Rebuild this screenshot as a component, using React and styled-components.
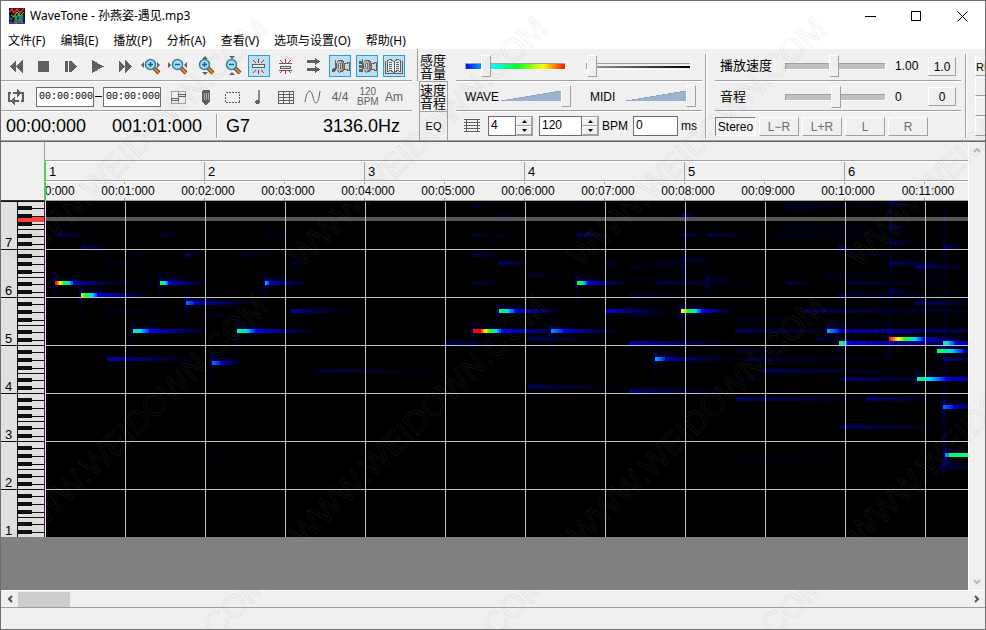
import React from 'react';
import styled, { createGlobalStyle, css } from 'styled-components';

const ui = '"Liberation Sans", "Noto Sans CJK SC", sans-serif';
const shell = '"Noto Sans", "Noto Sans CJK SC", sans-serif';

const Global = createGlobalStyle`
  * { box-sizing: border-box; }
  body { margin: 0; background: #f0f0f0; font-family: ${ui}; font-size: 12px; color: #000; }
  button, input { font: inherit; color: inherit; margin: 0; border-radius: 0; }
  svg { display: block; }
`;

const Window = styled.div`
  position: relative;
  display: flex;
  flex-direction: column;
  min-height: 100vh;
  border: 1px solid #6f6f71;
  background: #f0f0f0;
  overflow: hidden;
`;

/* ---------- title and menu ---------- */

const TitleBar = styled.header`
  display: flex;
  align-items: center;
  height: 30px;
  padding-left: 8px;
  background: #fff;
  font-family: ${shell};
`;
const Title = styled.h1`
  flex: 1;
  margin: 0 0 0 5px;
  font-size: 12px;
  font-weight: 400;
  line-height: 16px;
`;
const CaptionButton = styled.button`
  display: grid;
  place-items: center;
  width: 46px;
  height: 30px;
  padding: 0;
  border: 0;
  background: none;
`;
const MenuBar = styled.nav`
  display: flex;
  height: 18px;
  padding-left: 7px;
  gap: 15px;
  background: #fff;
  font-family: ${shell};
`;
const MenuItem = styled.button`
  padding: 2px 0 0;
  border: 0;
  background: none;
  font-size: 12px;
  line-height: 16px;
  white-space: nowrap;
`;

/* ---------- toolbar ---------- */

const Toolbar = styled.section`
  display: flex;
  height: 93px;
  overflow: hidden;
  border-bottom: 1px solid #696969;
  box-shadow: inset 0 -1px #a0a0a0;
`;
const Panel = styled.div`
  flex: none;
  display: grid;
  grid-template-rows: 33px 30px 28px;
  width: ${p => p.$width}px;
  margin-left: ${p => p.$gap || 0}px;
`;
const Row = styled.div`
  display: flex;
  align-items: center;
  gap: ${p => p.$gap || 0}px;
  padding: ${p => (p.$top ? '2px' : '0')} 0 0 ${p => p.$left || 0}px;
  &:not(:last-child) {
    border-bottom: 1px solid #fff;
    box-shadow: inset 0 -1px #a0a0a0;
  }
`;
const Group = styled.span`
  flex: none;
  display: flex;
  align-items: center;
  margin: 0 ${p => p.$after || 0}px 0 ${p => p.$before || 0}px;
`;
const Stack = styled.div`
  flex: none;
  display: flex;
  flex-direction: column;
  gap: 1px;
  padding-top: 8px;
  margin-left: 8px;
`;
const VRule = styled.div`
  flex: none;
  width: 2px;
  height: ${p => p.$height}px;
  margin: ${p => p.$margin || '0'};
  background: linear-gradient(to right, #a0a0a0 50%, #fff 50%);
`;
const ToolButton = styled.button`
  flex: none;
  display: grid;
  place-items: center;
  width: 22px;
  height: 22px;
  padding: 0;
  border: 1px solid ${p => (p.$on ? '#26a0da' : 'transparent')};
  background: ${p => (p.$on ? '#bcdff2' : 'none')};
  color: #606060;
  font-size: ${p => (p.$small ? 10 : 12)}px;
  line-height: 10px;
`;
const TimeInput = styled.input`
  width: 58px;
  height: 20px;
  padding: 0 0 1px 2px;
  border: 1px solid #6d6d6d;
  background: #fff;
  font-family: "Liberation Mono", monospace;
  font-size: 10px;
`;
const Dash = styled.span`
  width: 7px;
  height: 1px;
  margin: 0 1px;
  background: #000;
`;
const Readout = styled.output`
  width: ${p => p.$width}px;
  text-align: ${p => (p.$right ? 'right' : 'left')};
  font-size: 18px;
  line-height: 26px;
`;
const Tabs = styled.div`
  flex: none;
  display: grid;
  grid-template-rows: 32px 30px 29px;
  width: 31px;
  margin-left: 5px;
`;
const Tab = styled.button`
  padding: ${p => (p.$active ? '4px 0 0 2px' : '1px 0 0 0')};
  border: 0;
  border-left: 1px solid #a0a0a0;
  ${p => !p.$active && css`
    margin-left: 2px;
    border-top: 1px solid #a0a0a0;
    border-right: 1px solid #a0a0a0;
  `}
  background: #f0f0f0;
  font-size: ${p => (p.$latin ? 11 : 13)}px;
  line-height: 13px;
  text-align: ${p => (p.$latin ? 'center' : 'left')};
  overflow: hidden;
`;

const Slider = styled.input`
  appearance: none;
  flex: none;
  width: ${p => p.$width || 100}px;
  height: 22px;
  margin: ${p => p.$margin || '0'};
  background: ${p => p.$wedge
    ? 'linear-gradient(to bottom right, transparent 47%, #909aa8 48%, #9ab3d0 53%) 0 5px / 60px 10px no-repeat'
    : 'none'};
  &::-webkit-slider-runnable-track {
    height: 6px;
    background: ${p => (p.$wedge ? 'none' : p.$track || '#c0c0c0')};
    ${p => !p.$wedge && css`
      border-top: 1px solid #a0a0a0;
      border-left: 1px solid #a0a0a0;
      box-shadow: 1px 1px #fff;
    `}
  }
  &::-webkit-slider-thumb {
    appearance: none;
    width: 10px;
    height: 22px;
    margin-top: -9px;
    border: 1px solid;
    border-color: #fff #a0a0a0 #a0a0a0 #fff;
    background: #f0f0f0;
  }
`;
const Label = styled.label`
  flex: none;
  width: ${p => p.$width}px;
  font-size: ${p => p.$size || 12}px;
  line-height: 16px;
  white-space: nowrap;
`;
const Field = styled.input`
  width: ${p => p.$width}px;
  height: 20px;
  padding: 0 2px 2px;
  border: 1px solid #6d6d6d;
  background: #fff;
  font-size: 12px;
`;
const Spin = styled.span`
  display: flex;
  margin-right: ${p => p.$after}px;
`;
const SpinPair = styled.span`
  display: grid;
  grid-template-rows: 9px 9px;
  width: 17px;
  height: 20px;
  border: 1px solid #a0a0a0;
  border-left: 0;
`;
const SpinButton = styled.button`
  display: grid;
  place-items: center;
  height: 9px;
  padding: 0;
  border: 1px solid;
  border-color: #fff #a0a0a0 #a0a0a0 #fff;
  background: #f0f0f0;
`;
const PushButton = styled.button`
  flex: none;
  width: ${p => p.$width}px;
  height: 19px;
  padding: 1px 0 0;
  border: 1px solid;
  border-color: ${p => (p.$pressed ? '#808080 #fff #fff #808080' : '#fff #a0a0a0 #a0a0a0 #fff')};
  background: ${p => (p.$pressed ? '#f5f5f5' : '#f0f0f0')};
  color: ${p => (p.$dim ? '#6d6d6d' : '#000')};
  font-size: ${p => (p.$start ? 11 : 12)}px;
  line-height: 16px;
  text-align: ${p => (p.$start ? 'left' : 'center')};
  overflow: hidden;
  white-space: nowrap;
`;

/* ---------- editor ---------- */

const Workspace = styled.main`
  flex: 1;
  display: grid;
  grid-template-columns: 44px minmax(0, 1fr) 17px;
  grid-template-rows: 59px 1fr;
`;
const Corner = styled.div`
  border-right: 1px solid #a0a0a0;
  border-bottom: 1px solid #303030;
`;
const Ruler = styled.div`
  display: grid;
  grid-template-rows: 19px 20px 20px;
  overflow: hidden;
`;
const RulerHead = styled.div`
  border-bottom: 1px solid #a0a0a0;
`;
const Measures = styled.div`
  display: flex;
  overflow: hidden;
  border-top: 1px solid #fff;
  border-bottom: 1px solid #a0a0a0;
  border-left: 1px solid #0f0;
`;
const Measure = styled.span`
  flex: none;
  width: ${p => (p.$first ? 158 : 160)}px;
  padding-left: 3px;
  border-left: ${p => (p.$first ? '0' : '1px solid #a0a0a0')};
  font-size: 13px;
  line-height: 20px;
`;
const Times = styled.div`
  display: flex;
  overflow: hidden;
  border-left: 1px solid #0f0;
  border-top: 1px solid #fff;
  border-bottom: 1px solid #a0a0a0;
  background:
    repeating-linear-gradient(to right, transparent 0 78px, #a0a0a0 78px 79px, transparent 79px 80px) 0 0 / 100% 2px no-repeat,
    repeating-linear-gradient(to right, transparent 0 78px, #a0a0a0 78px 79px, transparent 79px 80px) 0 100% / 100% 2px no-repeat;
`;
const TimeStrip = styled.div`
  display: flex;
  margin-left: -38px;
`;
const Time = styled.span`
  flex: none;
  width: 80px;
  text-align: center;
  font-size: 12px;
  line-height: 19px;
`;
const VScroll = styled.div`
  grid-column: 3;
  grid-row: 1 / 3;
  display: flex;
  flex-direction: column;
  justify-content: space-between;
  align-items: center;
  border-left: 1px solid #fff;
`;
const ScrollButton = styled.button`
  display: grid;
  place-items: center;
  width: ${p => p.$width || 16}px;
  height: 16px;
  padding: 0;
  border: 0;
  background: none;
`;
const Void = styled.div`
  background: #808080;
  min-width: 0;
`;
const HScroll = styled.div`
  display: flex;
  align-items: center;
  height: 18px;
  border-top: 1px solid #fff;
  border-bottom: 1px solid #a0a0a0;
`;
const Thumb = styled.div`
  width: 52px;
  height: 15px;
  margin-right: auto;
  background: #cdcdcd;
`;
const Status = styled.footer`
  height: 21px;
`;
const Overlay = styled.svg`
  position: absolute;
  inset: 0;
  width: 100%;
  height: 100%;
  pointer-events: none;
`;

/* ---------- icons ---------- */

const Icon = ({ w = 20, h = 20, children }) => (
  <svg width={w} height={h} viewBox={`0 0 ${w} ${h}`} shapeRendering="crispEdges" aria-hidden="true">{children}</svg>
);
const G = '#606060';

const Rewind = () => <Icon><path d="M10 4v13L4 10.500zM17 4v13l-7-6.500z" fill={G} /></Icon>;
const Stop = () => <Icon><path d="M5 5h11v11H5z" fill={G} /></Icon>;
const Step = () => <Icon><path d="M5 5h3v11H5zM9 5h3v11H9zM12 5l5 5.500-5 5.500z" fill={G} /></Icon>;
const Play = () => <Icon><path d="M5 4l12 6.500L5 17z" fill={G} /></Icon>;
const Forward = () => <Icon><path d="M5 4v13l6-6.500zM11 4v13l7-6.500z" fill={G} /></Icon>;

const Magnifier = ({ plus, vertical, inward }) => {
  const arrows = vertical
    ? (inward ? 'M7 0h6l-3 3zM7 19h6l-3-3z' : 'M7 3h6l-3-3zM7 16h6l-3 3z')
    : (inward ? 'M0 6v6l3-3zM19 6v6l-3-3z' : 'M3 6v6l-3-3zM16 6v6l3-3z');
  return (
    <svg width="20" height="20" viewBox="0 0 20 20" aria-hidden="true">
      <path d={arrows} fill="#606060" />
      <path d="M13 12l5 5" stroke="#7c3f10" strokeWidth="4" />
      <path d="M13 12l5 5" stroke="#d98a35" strokeWidth="2" />
      <circle cx="9.500" cy="8.500" r="5" fill="#a9def5" stroke="#2e7fa8" strokeWidth="1.500" />
      <path d={plus ? 'M7 8.500h5M9.500 6v5' : 'M7 8.500h5'} stroke="#17648c" strokeWidth="1.500" />
    </svg>
  );
};
const Flash = ({ bars }) => (
  <Icon>
    <path d="M9.500 3v4M9.500 14v4M4 4l3 3M15 4l-3 3M4 17l3-3M15 17l-3-3" stroke="#e02020" fill="none" />
    {bars
      ? <path d="M3 7.500h13M4.500 10h10v2h-10zM3 14.500h13" stroke={G} fill="#d8d8d8" />
      : <path d="M3.500 8.500h12v3h-12z" fill="#e0ecf2" stroke={G} />}
  </Icon>
);
const Arrows = () => <Icon><path d="M4 4h8V2l5 3.500L12 9V7H4zM4 12h8v-2l5 3.500-5 3.500v-2H4z" fill={G} /></Icon>;
const Speaker = ({ stack }) => (
  <Icon>
    {stack
      ? <path d="M5 3h1v13H5zM2 5h3v3H2zM2 9h3v3H2zM2 13h3v3H2z" fill={G} />
      : <path d="M5 4h1v11H5zM2 13h1v-1h2v4H2z" fill={G} />}
    <path d="M13 7h4v-1h2v8h-2v-1h-4z" fill="#d4d4d4" stroke={G} />
    <ellipse cx="11.500" cy="10" rx="3" ry="5.500" fill="#8c8c8c" stroke={G} />
    <ellipse cx="9.500" cy="10" rx="3" ry="6" fill="#b4b4b4" stroke={G} />
    <ellipse cx="9.500" cy="10" rx="1" ry="3" fill="#dedede" stroke={G} strokeWidth=".8" />
  </Icon>
);
const Book = () => (
  <Icon>
    <path d="M3.500 4.500l3-1 3.500 2 3.500-2 3 1v11l-3-1-3.500 2-3.500-2-3 1z" fill="#e6eef2" stroke={G} />
    <path d="M10 5v11M1.500 5v12h17V5M5 6.500h3M5 8.500h3M5 10.500h3M5 12.500h3M12 6.500h3M12 8.500h3M12 10.500h3M12 12.500h3" stroke={G} fill="none" />
  </Icon>
);
const Loop = () => (
  <Icon>
    <path d="M6 14H3V6h2M15 6h2v8h-2M7 6h5M8 14h5" fill="none" stroke={G} strokeWidth="2" />
    <path d="M11 2l5 4-5 4zM9 10l-5 4 5 4z" fill={G} />
  </Icon>
);
const Layout = () => (
  <Icon>
    <path d="M3.500 4.500h14v12h-14zM10.500 4v12" fill="none" stroke="#a0a0a0" />
    <path d="M3.500 11.500h7v2h-7zM10.500 7.500h7v2h-7z" fill="#eee" stroke={G} />
  </Icon>
);
const Pencil = () => (
  <Icon>
    <path d="M8 3h6l1 1v10l-3 4h-2l-3-4V4z" fill={G} />
    <path d="M9.500 6v7M11.500 6v7M13.500 6v7" stroke="#a8a8a8" />
  </Icon>
);
const Marquee = () => <Icon><path d="M3.500 5.500h14v10h-14z" fill="none" stroke={G} strokeDasharray="2 1" /></Icon>;
const Note = () => <Icon><path d="M9 3h2v12h-2z" fill="#8a8a8a" /><ellipse cx="8.500" cy="15" rx="2.500" ry="2" fill={G} /></Icon>;
const Sheet = () => (
  <Icon>
    <path d="M2.500 4.500h15v12h-15z" fill="none" stroke={G} />
    <path d="M2 7.500h15M2 10.500h15M2 13.500h15M7.500 4v12M13.500 4v12" stroke={G} />
  </Icon>
);
const Curve = () => (
  <svg width="20" height="20" viewBox="0 0 20 20" aria-hidden="true">
    <path d="M2 15C4 2 8 1 10 10S15 19 17 4" fill="none" stroke={G} />
  </svg>
);
const Staff = () => (
  <Icon w={16} h={16}>
    <path d="M0 1.500h16M0 4.500h16M0 7.500h16M0 10.500h16M0 13.500h16M2.500 1v13M13.500 1v13" stroke={G} />
  </Icon>
);
const AppIcon = () => (
  <svg width="16" height="16" viewBox="0 0 16 16" aria-hidden="true">
    <path d="M0 0h16v16H0z" fill="#10131a" />
    <path d="M0 4l3-3 2 4 3-4 3 4 4-5" stroke="#e52929" fill="none" strokeWidth="1.500" />
    <path d="M2 7l3 2 3-5 3 4 4-4" stroke="#d8a622" fill="none" />
    <path d="M5 7l2 3 3-4 1 5 3-4" stroke="#22b84b" fill="none" strokeWidth="1.500" />
    <path d="M0 7v4l4-1M2 10v5M9 10h6M13 8v5" stroke="#2b63d8" fill="none" />
    <path d="M6 11v4h2v-4zM10 15v-4l3 4v-4" stroke="#46c0a0" fill="none" />
    <path d="M0 15h16" stroke="#b33cbf" />
  </svg>
);
const Chevron = ({ dir, color = '#505050' }) => {
  const d = { up: 'M1 6l3-3 3 3', down: 'M1 2l3 3 3-3', left: 'M6 1L3 4l3 3', right: 'M2 1l3 3-3 3' }[dir];
  return <svg width="8" height="8" viewBox="0 0 8 8" aria-hidden="true"><path d={d} fill="none" stroke={color} strokeWidth="2" /></svg>;
};
const Triangle = ({ up }) => (
  <svg width="5" height="3" viewBox="0 0 5 3" aria-hidden="true"><path d={up ? 'M0 3h5L2.500 0z' : 'M0 0h5L2.500 3z'} /></svg>
);

/* ---------- piano ---------- */

const OCTAVES = [7, 6, 5, 4, 3, 2, 1];
const BLACK_ROWS = [5, 13, 21, 33, 41];

const Piano = () => (
  <svg width="44" height="336" viewBox="0 0 44 336" shapeRendering="crispEdges" role="img" aria-label="钢琴键盘">
    <rect width="44" height="336" fill="#e0e0e0" />
    {OCTAVES.map((n, i) => (
      <g key={n} transform={`translate(0 ${i * 48})`}>
        {BLACK_ROWS.map(y => <rect key={y} x="30" y={y + 2} width="13" height="1" fill="#101010" />)}
        <path d="M17 28.500h26M0 .5h43" stroke="#101010" />
      </g>
    ))}
    <rect x="17" y="16" width="26" height="5" fill="#ff4040" />
    {OCTAVES.map((n, i) => (
      <g key={n} transform={`translate(0 ${i * 48})`}>
        {BLACK_ROWS.map(y => <rect key={y} x="17" y={y} width="14" height="4" fill="#101010" />)}
        <text x="4" y="46" fontSize="13" fontFamily="Liberation Sans, sans-serif">{n}</text>
      </g>
    ))}
    <path d="M16.500 0v336" stroke="#101010" />
    <path d="M43.500 0v336" stroke="#303030" />
  </svg>
);

/* ---------- spectrogram ---------- */

// [x, row top, peak level, head length, tail length, tail level]
const NOTES = [
  [10, 80, .98, 18, 50, .2], [36, 92, .8, 16, 60, .22], [88, 128, .58, 16, 64, .25], [62, 156, .2, 0, 100, .17],
  [115, 80, .66, 8, 40, .22], [141, 100, .36, 8, 66, .18], [192, 128, .62, 18, 64, .25], [167, 160, .36, 8, 24, .2],
  [220, 80, .42, 4, 44, .2], [246, 108, .18, 0, 60, .16], [62, 108, .05, 0, 80, .03], [272, 168, .09, 0, 150, .06],
  [12, 32, .12, 0, 40, .08], [36, 44, .13, 0, 30, .09], [140, 52, .14, 0, 16, .1], [88, 52, .06, 0, 30, .03],
  [115, 32, .06, 0, 30, .04], [220, 32, .06, 0, 40, .03], [192, 52, .07, 0, 50, .04], [246, 60, .08, 0, 20, .06],
  [62, 60, .05, 0, 60, .03], [167, 112, .07, 0, 30, .04], [62, 80, .06, 0, 60, .04],
  [428, 128, 1.15, 28, 80, .25], [454, 108, .62, 16, 50, .22], [401, 140, .1, 0, 60, .09], [482, 136, .13, 0, 70, .1],
  [506, 128, .4, 12, 60, .22], [532, 80, .68, 10, 44, .22], [560, 108, .22, 0, 66, .21], [584, 140, .2, 0, 120, .17],
  [610, 156, .42, 10, 80, .16], [636, 108, .85, 20, 34, .24], [662, 80, .84, 12, 34, .22], [638, 60, .34, 6, 26, .14],
  [454, 60, .14, 0, 34, .12], [428, 52, .12, 0, 34, .08], [428, 32, .08, 0, 30, .05], [454, 32, .06, 0, 20, .04],
  [532, 32, .11, 0, 36, .09], [636, 32, .1, 0, 26, .08], [662, 32, .1, 0, 50, .08], [482, 184, .11, 0, 110, .09],
  [584, 188, .14, 0, 110, .12], [610, 80, .1, 0, 110, .07], [610, 60, .07, 0, 70, .05], [560, 60, .09, 0, 20, .07],
  [584, 64, .06, 0, 50, .04], [482, 72, .06, 0, 50, .04], [584, 76, .05, 0, 60, .03], [584, 92, .07, 0, 80, .05],
  [584, 112, .06, 0, 60, .04], [428, 80, .07, 0, 40, .05], [428, 4, .08, 0, 20, .05], [532, 4, .05, 0, 10, .03],
  [636, 12, .14, 0, 16, .12], [454, 12, .07, 0, 20, .05], [690, 128, .11, 0, 130, .09], [691, 148, .08, 0, 60, .05],
  [691, 196, .11, 0, 170, .1], [691, 116, .05, 0, 100, .03],
  [782, 128, .42, 12, 240, .2], [794, 140, .62, 8, 200, .24], [844, 136, .98, 34, 44, .24], [898, 140, .54, 12, 80, .25],
  [892, 148, .66, 26, 60, .24], [742, 156, .13, 0, 70, .12], [717, 168, .11, 0, 170, .09], [796, 176, .14, 0, 160, .12],
  [872, 176, .6, 28, 140, .25], [822, 196, .15, 0, 80, .13], [898, 204, .36, 10, 60, .2], [796, 224, .14, 0, 120, .12],
  [900, 252, .56, 500, 10, .2], [898, 260, .1, 0, 24, .1], [894, 264, .09, 0, 50, .08], [844, 24, .13, 0, 24, .1],
  [844, 40, .13, 0, 30, .1], [794, 44, .12, 0, 16, .1], [898, 44, .14, 0, 26, .12], [844, 60, .13, 0, 60, .12],
  [870, 64, .15, 0, 60, .14], [872, 80, .14, 0, 90, .12], [742, 80, .1, 0, 30, .08], [844, 88, .12, 0, 24, .1],
  [794, 92, .09, 0, 60, .08], [870, 100, .12, 0, 80, .12], [844, 0, .12, 0, 20, .1], [898, 92, .12, 0, 60, .1],
  [838, 108, .24, 0, 180, .22], [760, 108, .08, 0, 300, .08], [898, 156, .13, 0, 80, .12], [770, 136, .08, 0, 60, .06],
  [740, 4, .08, 0, 160, .05], [765, 4, .06, 0, 60, .05], [742, 24, .05, 0, 160, .03], [730, 32, .05, 0, 240, .03],
  [780, 72, .05, 0, 180, .03], [700, 156, .06, 0, 200, .06], [800, 52, .05, 0, 160, .03], [690, 176, .04, 0, 100, .02],
  [800, 92, .05, 0, 160, .06], [800, 80, .05, 0, 160, .06], [780, 120, .05, 0, 160, .03], [170, 256, .03, 0, 40, .02],
  [690, 256, .04, 0, 200, .02],
];

const levelColor = v => {
  const stops = [[0, 0, 0, 0], [.25, 0, 0, 255], [.48, 0, 220, 255], [.62, 0, 255, 110], [.72, 30, 255, 0], [.85, 255, 255, 0], [1, 255, 0, 0]];
  const t = Math.min(Math.max(v, 0), 1);
  const i = Math.max(1, stops.findIndex(s => s[0] >= t));
  const a = stops[i - 1];
  const b = stops[i];
  const k = (t - a[0]) / (b[0] - a[0]);
  return `rgb(${[1, 2, 3].map(c => Math.round(a[c] + (b[c] - a[c]) * k)).join(' ')})`;
};

const cells = NOTES.flatMap(([x, y, peak, head, tail, base], n) => {
  const out = [];
  const end = Math.min(head + tail, 924 - x);
  for (let d = 0; d < end; d += 2) {
    const fall = Math.max(0, 1 - (d - head) / tail);
    let v = d < head ? peak - (peak - .26) * (d / head) ** 1.2 : base * fall ** 1.3;
    if (head === 500) v = d < 4 ? .4 : peak + .06;
    if (x > 730 && d > head) v *= .88 + .12 * Math.sin(d * .9 + n * 2);
    if (v > .008) out.push({ x: x + d, y, v });
  }
  return out;
});

const Spectrogram = () => (
  <svg width="100%" height="336" shapeRendering="crispEdges" role="img" aria-label="频谱">
    <defs>
      <pattern id="grid" width="80" height="48" patternUnits="userSpaceOnUse">
        <path d="M0 0h80v1H0zM0 0h1v48H0z" fill="#c0c0c0" />
      </pattern>
    </defs>
    <rect width="100%" height="336" fill="#000" />
    {NOTES.filter(n => n[2] > .3).map(([x, y]) => (
      <g key={`${x}-${y}`} fill="#0000ff">
        <rect x={x - 2} y={y - 12} width="4" height="32" opacity=".08" />
        <rect x={x} y={y - 4} width="22" height="4" opacity=".14" />
        <rect x={x - 2} y={y - 4} width="4" height="12" opacity=".2" />
      </g>
    ))}
    <rect x="640" width="3" height="150" fill="#0000ff" opacity=".07" />
    <rect x="844" width="3" height="160" fill="#0000ff" opacity=".12" />
    <rect x="898" y="4" width="3" height="270" fill="#0000ff" opacity=".14" />
    {cells.map((c, i) => <rect key={i} x={c.x} y={c.y} width="2" height="4" fill={levelColor(c.v)} />)}
    <rect y="16" width="100%" height="4" fill="#fff" opacity=".34" />
    <rect y="1" width="100%" height="335" fill="url(#grid)" />
    <rect width="1" height="336" fill="#ffc8ff" />
  </svg>
);

/* ---------- page ---------- */

const MENUS = ['文件(F)', '编辑(E)', '播放(P)', '分析(A)', '查看(V)', '选项与设置(O)', '帮助(H)'];
const TRANSPORT = [
  ['快退', <Rewind />], ['停止', <Stop />], ['慢放', <Step />], ['播放', <Play />], ['快进', <Forward />],
  ['水平放大', <Magnifier plus />], ['水平缩小', <Magnifier inward />],
  ['垂直放大', <Magnifier plus vertical />], ['垂直缩小', <Magnifier vertical inward />],
  ['单音高亮', <Flash />, true], ['和音高亮', <Flash bars />], ['自动滚动', <Arrows />],
  ['音符发声', <Speaker />, true], ['和弦发声', <Speaker stack />, true], ['歌词', <Book />, true],
];
const TOOLS = [
  ['区域', <Layout />], ['铅笔', <Pencil />], ['选择', <Marquee />], ['音符', <Note />], ['表格', <Sheet />],
  ['曲线', <Curve />], ['拍号', '4/4'], ['速度', <>120<br />BPM</>, true], ['和弦', 'Am'],
];
const MIXES = ['L−R', 'L+R', 'L', 'R'];
const marks = [262, 540, 818].flatMap(y => [12, 291, 570, 849].map(x => [x, y]));

const SpinField = ({ label, value, width, after }) => (
  <Spin $after={after}>
    <Field $width={width} aria-label={label} defaultValue={value} />
    <SpinPair>
      <SpinButton aria-label={`${label}增加`}><Triangle up /></SpinButton>
      <SpinButton aria-label={`${label}减少`}><Triangle /></SpinButton>
    </SpinPair>
  </Spin>
);

export default function App() {
  return (
    <Window>
      <Global />
      <TitleBar>
        <AppIcon />
        <Title>WaveTone - 孙燕姿-遇见.mp3</Title>
        <CaptionButton aria-label="最小化"><Icon w={11} h={11}><path d="M0 5.500h11" stroke="#000" /></Icon></CaptionButton>
        <CaptionButton aria-label="最大化"><Icon w={11} h={11}><path d="M.5.5h9v9h-9z" fill="none" stroke="#000" /></Icon></CaptionButton>
        <CaptionButton aria-label="关闭">
          <svg width="11" height="11" viewBox="0 0 11 11"><path d="M.5.5l10 10M10.500.5l-10 10" stroke="#000" /></svg>
        </CaptionButton>
      </TitleBar>
      <MenuBar>{MENUS.map(m => <MenuItem key={m}>{m}</MenuItem>)}</MenuBar>

      <Toolbar>
        <Panel $width={411}>
          <Row $top $left={4} $gap={5}>
            {TRANSPORT.map(([name, icon, on]) => <ToolButton key={name} aria-label={name} $on={on}>{icon}</ToolButton>)}
          </Row>
          <Row $left={4} $gap={5}>
            <ToolButton aria-label="循环"><Loop /></ToolButton>
            <Group $before={4} $after={1}>
              <TimeInput aria-label="循环起点" defaultValue="00:00:000" />
              <Dash />
              <TimeInput aria-label="循环终点" defaultValue="00:00:000" />
            </Group>
            {TOOLS.map(([name, icon, small]) => <ToolButton key={name} aria-label={name} $small={small}>{icon}</ToolButton>)}
          </Row>
          <Row $left={5}>
            <Readout $width={106}>00:00:000</Readout>
            <Readout $width={104}>001:01:000</Readout>
            <VRule $height={24} $margin="0 8px 0 0" />
            <Readout $width={60}>G7</Readout>
            <Readout $width={114} $right>3136.0Hz</Readout>
          </Row>
        </Panel>
        <Tabs role="tablist">
          <Tab role="tab" aria-selected="true" $active>感度<br />音量</Tab>
          <Tab role="tab">速度<br />音程</Tab>
          <Tab role="tab" $latin>EQ</Tab>
        </Tabs>

        <Panel $width={246} $gap={8}>
          <Row $top $left={9}>
            <Slider type="range" aria-label="感度" defaultValue="17" $margin="0 21px 0 0"
              $track="linear-gradient(to right, #0010ff, #00ffff 27%, #00ff20 52%, #ffff00 78%, #ff1000)" />
            <Slider type="range" aria-label="背景" defaultValue="0" $width={104}
              $track="linear-gradient(to right, #a0a0a0, #000) 0 2px / 100% 2px no-repeat" />
          </Row>
          <Row $left={9}>
            <Label htmlFor="wave" $width={36}>WAVE</Label>
            <Slider id="wave" type="range" defaultValue="100" $wedge $width={70} $margin="0 19px 0 0" />
            <Label htmlFor="midi" $width={36}>MIDI</Label>
            <Slider id="midi" type="range" defaultValue="100" $wedge $width={70} />
          </Row>
          <Row $left={8}>
            <Staff />
            <Group $before={8}>
              <SpinField label="拍数" value="4" width={28} after={6} />
              <SpinField label="BPM" value="120" width={43} after={3} />
            </Group>
            <Label htmlFor="offset" $width={31}>BPM</Label>
            <Field id="offset" $width={45} defaultValue="0" />
            <Group $before={3}>ms</Group>
          </Row>
        </Panel>
        <VRule $height={84} $margin="5px 0 0 3px" />

        <Panel $width={246} $gap={8}>
          <Row $top $left={5}>
            <Label htmlFor="speed" $width={65} $size={13}>播放速度</Label>
            <Slider id="speed" type="range" defaultValue="48" />
            <Group $before={10}><Label as="output" $width={33} $size={12}>1.00</Label></Group>
            <PushButton $width={28}>1.0</PushButton>
          </Row>
          <Row $left={5}>
            <Label htmlFor="pitch" $width={65} $size={13}>音程</Label>
            <Slider id="pitch" type="range" defaultValue="51" />
            <Group $before={10}><Label as="output" $width={33} $size={12}>0</Label></Group>
            <PushButton $width={28}>0</PushButton>
          </Row>
          <Row $gap={3}>
            <PushButton $width={41} $pressed>Stereo</PushButton>
            {MIXES.map(m => <PushButton key={m} $width={40} $dim>{m}</PushButton>)}
          </Row>
        </Panel>
        <VRule $height={84} $margin="5px 0 0 4px" />
        <Stack>
          <PushButton $width={58} $start>RESET</PushButton>
          <PushButton $width={58} aria-label="预设一" />
          <PushButton $width={58} aria-label="预设二" />
          <PushButton $width={58} aria-label="预设三" />
        </Stack>
      </Toolbar>

      <Workspace>
        <Corner />
        <Ruler>
          <RulerHead />
          <Measures>{[1, 2, 3, 4, 5, 6].map(n => <Measure key={n} $first={n === 1}>{n}</Measure>)}</Measures>
          <Times>
            <TimeStrip>
              {Array.from({ length: 12 }, (_, i) => <Time key={i}>{`00:${String(i).padStart(2, '0')}:000`}</Time>)}
            </TimeStrip>
          </Times>
        </Ruler>
        <Void><Piano /></Void>
        <Void><Spectrogram /></Void>
        <VScroll>
          <ScrollButton aria-label="向上滚动"><Chevron dir="up" color="#b8b8b8" /></ScrollButton>
          <ScrollButton aria-label="向下滚动"><Chevron dir="down" color="#b8b8b8" /></ScrollButton>
        </VScroll>
      </Workspace>
      <HScroll>
        <ScrollButton aria-label="向左滚动" $width={17}><Chevron dir="left" /></ScrollButton>
        <Thumb />
        <ScrollButton aria-label="向右滚动" $width={17}><Chevron dir="right" /></ScrollButton>
      </HScroll>
      <Status />

      <Overlay aria-hidden="true">
        {marks.map(([x, y]) => (
          <text key={`${x}-${y}`} transform={`translate(${x + 10} ${y + 6}) rotate(-44)`} fontSize="32"
            fontFamily="Liberation Sans, sans-serif" fill="none" stroke="#808080" strokeOpacity=".13">WWW.WEIDOWN.COM</text>
        ))}
      </Overlay>
    </Window>
  );
}
